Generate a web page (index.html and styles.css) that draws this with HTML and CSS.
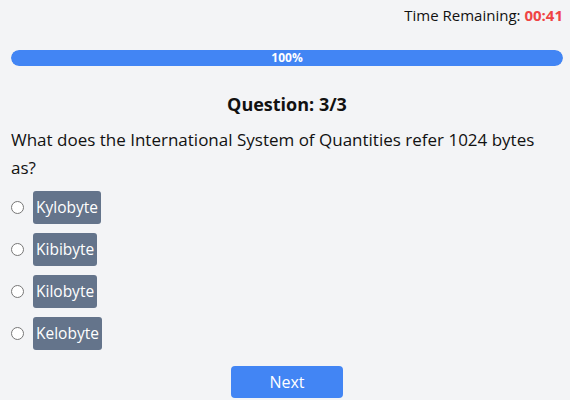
FILE: index.html
```html
<!DOCTYPE html>
<html>
<head>
<meta charset="utf-8">
<link rel="stylesheet" href="styles.css">
</head>
<body>
<div class="quiz">
  <div class="timer">Time Remaining: <span class="time">00:41</span></div>
  <div class="progress"><div class="progress-fill" style="width:100%">100%</div></div>
  <h2 class="qnum">Question: 3/3</h2>
  <p class="question">What does the International System of Quantities refer 1024 bytes as?</p>
  <div class="options">
    <label class="option"><input type="radio" name="a"><span class="opt-label">Kylobyte</span></label>
    <label class="option"><input type="radio" name="a"><span class="opt-label">Kibibyte</span></label>
    <label class="option"><input type="radio" name="a"><span class="opt-label">Kilobyte</span></label>
    <label class="option"><input type="radio" name="a"><span class="opt-label">Kelobyte</span></label>
  </div>
  <div class="actions"><button class="next">Next</button></div>
</div>
</body>
</html>
```
FILE: styles.css
```css
html, body {
  margin: 0;
  padding: 0;
  background: #f3f4f6;
}
body {
  font-family: "Open Sans", "Noto Sans", sans-serif;
  color: #111;
}
.quiz {
  padding: 4px 7px 0 11px;
}
.timer {
  text-align: right;
  font-size: 15px;
  line-height: 22px;
}
.time {
  color: #ef4444;
  font-weight: 700;
}
.progress {
  margin-top: 24px;
  height: 16px;
  background: #e5e7eb;
  border-radius: 8px;
  overflow: hidden;
}
.progress-fill {
  height: 100%;
  background: #4285f4;
  border-radius: 8px;
  color: #fff;
  font-size: 12px;
  font-weight: 700;
  line-height: 16px;
  text-align: center;
}
.qnum {
  text-align: center;
  font-size: 18px;
  font-weight: 700;
  margin: 26px 0 0;
  line-height: 24px;
}
.question {
  font-size: 17px;
  line-height: 28px;
  margin: 10px 0 9px;
}
.options {
  display: flex;
  flex-direction: column;
  gap: 9px;
}
.option {
  display: flex;
  align-items: center;
  gap: 9px;
}
.option input {
  margin: 0;
  width: 13px;
  height: 13px;
}
.opt-label {
  background: #64748b;
  color: #fff;
  font-size: 15.5px;
  line-height: 33px;
  padding: 0 3px;
  border-radius: 3px;
}
.actions {
  display: flex;
  justify-content: center;
  margin-top: 16px;
}
.next {
  background: #4285f4;
  color: #fff;
  border: none;
  border-radius: 4px;
  width: 112px;
  height: 32px;
  font-family: inherit;
  font-size: 16px;
}
```
